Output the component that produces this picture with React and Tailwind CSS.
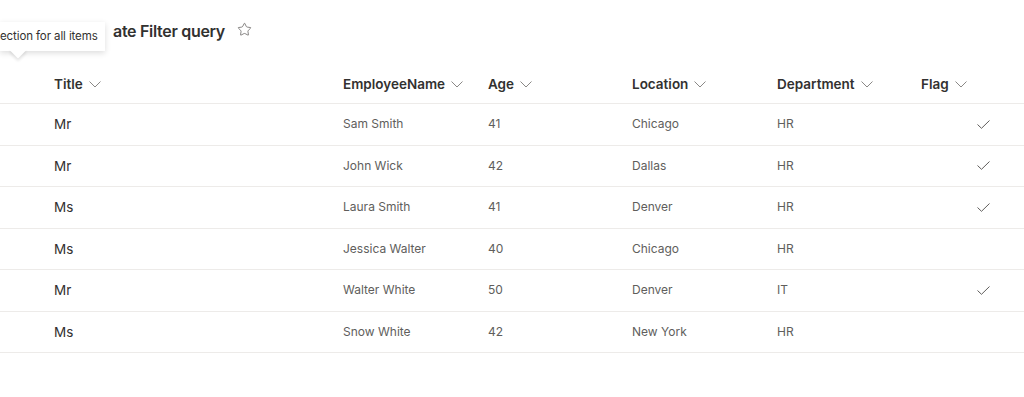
import { Star } from 'lucide-react';

const rows = [
  { title: 'Mr', name: 'Sam Smith', age: 41, location: 'Chicago', dept: 'HR', flag: true },
  { title: 'Mr', name: 'John Wick', age: 42, location: 'Dallas', dept: 'HR', flag: true },
  { title: 'Ms', name: 'Laura Smith', age: 41, location: 'Denver', dept: 'HR', flag: true },
  { title: 'Ms', name: 'Jessica Walter', age: 40, location: 'Chicago', dept: 'HR', flag: false },
  { title: 'Mr', name: 'Walter White', age: 50, location: 'Denver', dept: 'IT', flag: true },
  { title: 'Ms', name: 'Snow White', age: 42, location: 'New York', dept: 'HR', flag: false },
];

const cols = 'grid grid-cols-[54px_289px_145px_144px_145px_144px_1fr] items-center';

function Chevron() {
  return (
    <svg width="12" height="7" viewBox="0 0 12 7" fill="none" className="text-[#8a8886]">
      <path d="M0.5 0.5 L6 6 L11.5 0.5" stroke="currentColor" strokeWidth="1" />
    </svg>
  );
}

function Tick() {
  return (
    <svg width="13" height="9" viewBox="0 0 13 9" fill="none" className="text-[#605e5c]">
      <path d="M0.5 4.5 L4.5 8.3 L12.5 0.5" stroke="currentColor" strokeWidth="1" />
    </svg>
  );
}

function HeaderCell({ label }) {
  return (
    <div className="flex items-center gap-[6px] text-[13.5px] font-semibold text-[#323130]">
      <span>{label}</span>
      <Chevron />
    </div>
  );
}

export default function App() {
  return (
    <div className="relative w-[1024px] h-[397px] bg-white overflow-hidden" style={{ fontFamily: 'Inter, "Noto Sans", sans-serif' }}>
      {/* list title (start hidden under the tooltip) */}
      <div className="flex items-center h-[61px] pl-[113px]">
        <h1 className="text-[16px] font-semibold text-[#323130] tracking-[-0.3px] whitespace-nowrap">ate Filter query</h1>
        <Star size={15} strokeWidth={1.2} className="ml-[12px] -mt-[2px] text-[#605e5c]" />
      </div>

      {/* tooltip */}
      <div className="absolute left-0 top-[22px]">
        <div className="relative w-[105px] h-[29px] bg-white shadow-[0_2px_6px_rgba(0,0,0,0.14)] flex items-center">
          <span className="whitespace-nowrap text-[11.5px] tracking-[-0.1px] text-[#323130]">ection for all items</span>
        </div>
        <div className="absolute left-[12px] top-[22px] w-[12px] h-[12px] bg-white rotate-45 shadow-[2px_2px_3px_rgba(0,0,0,0.1)]" />
        <div className="absolute left-[4px] top-[18px] w-[30px] h-[10px] bg-white" />
      </div>

      {/* header */}
      <div className={`${cols} h-[43px] pt-[4px] border-b border-[#edebe9]`}>
        <div />
        <HeaderCell label="Title" />
        <HeaderCell label="EmployeeName" />
        <HeaderCell label="Age" />
        <HeaderCell label="Location" />
        <HeaderCell label="Department" />
        <HeaderCell label="Flag" />
      </div>

      {/* rows */}
      {rows.map((r, i) => (
        <div key={i} className={`${cols} h-[41.5px] border-b border-[#edebe9] text-[12px] text-[#605e5c]`}>
          <div />
          <div className="text-[13.5px] text-[#323130]">{r.title}</div>
          <div>{r.name}</div>
          <div>{r.age}</div>
          <div>{r.location}</div>
          <div>{r.dept}</div>
          <div className="flex justify-end pr-[34px]">
            {r.flag && <Tick />}
          </div>
        </div>
      ))}
    </div>
  );
}
